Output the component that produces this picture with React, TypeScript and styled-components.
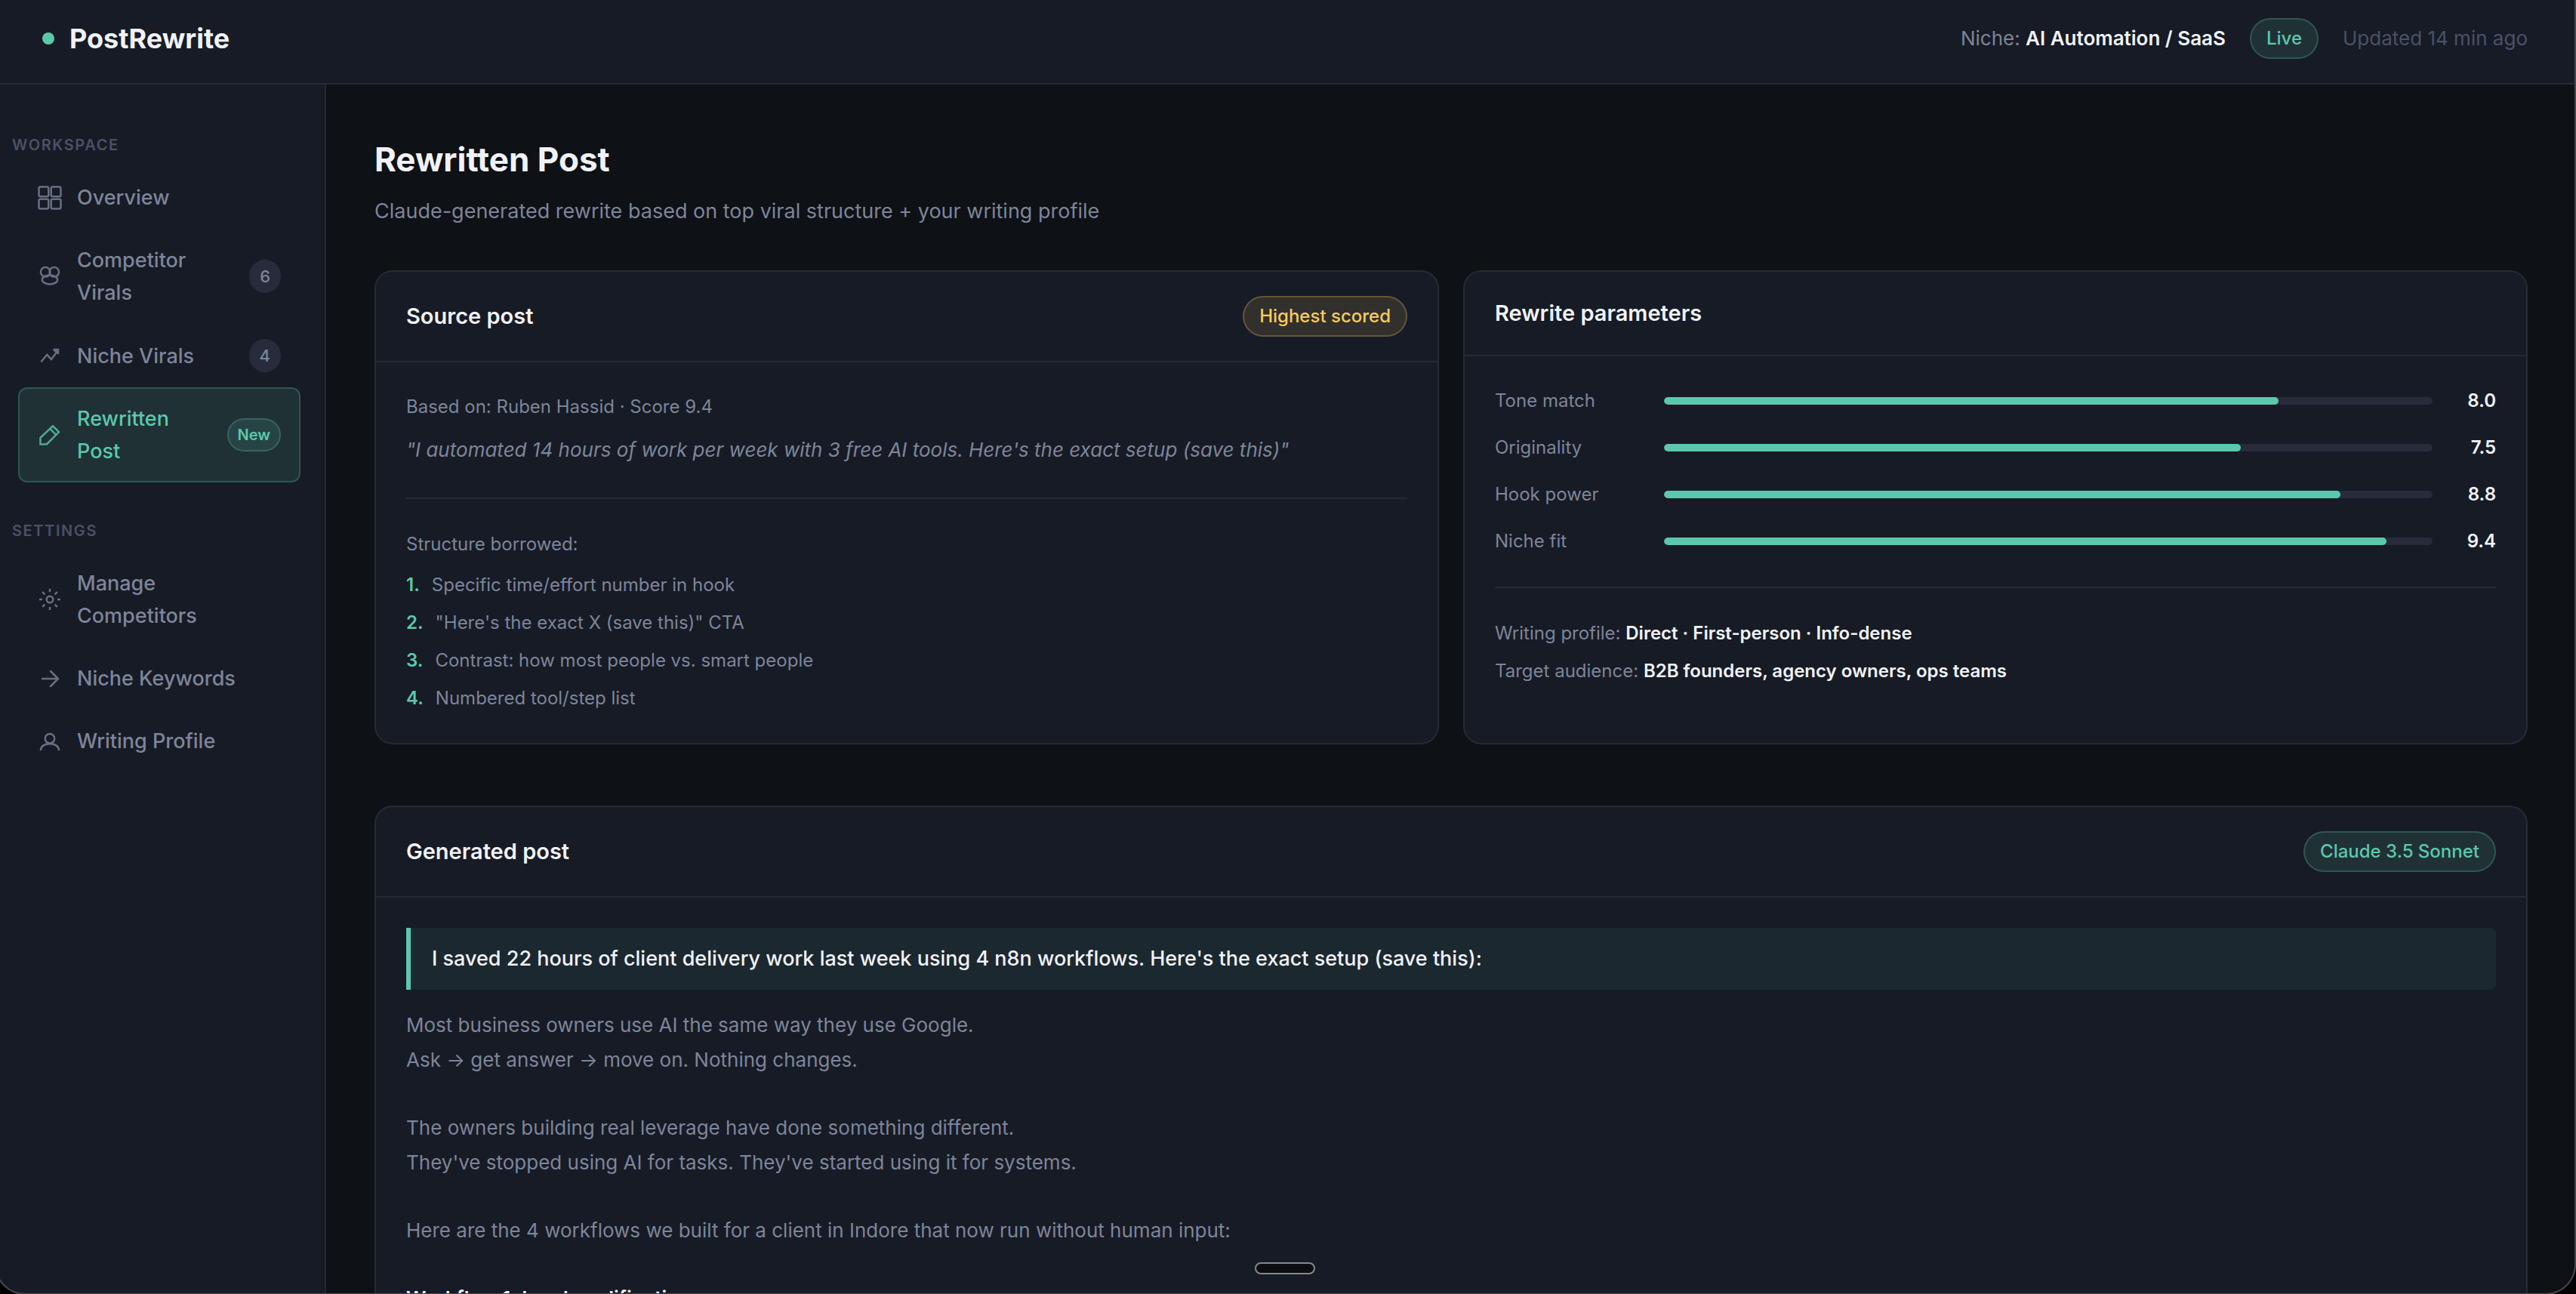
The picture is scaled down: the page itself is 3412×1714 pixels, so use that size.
import React from "react";
import styled, { createGlobalStyle, css } from "styled-components";

const c = {
  bg: "#0e1115",
  surface: "#171b25",
  raised: "#272b3b",
  line: "#262a34",
  text: "#f0f2f8",
  muted: "#7d859a",
  dim: "#4a5168",
  accent: "#5bc8ac",
  accentSoft: "rgba(91, 200, 172, 0.13)",
  accentLine: "rgba(91, 200, 172, 0.25)",
  gold: "#f5cc60",
};

const Global = createGlobalStyle`
  *, *::before, *::after { box-sizing: border-box; }
  html, body { margin: 0; height: 100%; background: ${c.bg}; }
  #root { height: 100%; }
  h1, h2, p, ol, ul, dl, dd, blockquote { margin: 0; padding: 0; }
  ol, ul { list-style: none; }
`;

const Window = styled.div`
  height: 100vh;
  display: flex;
  flex-direction: column;
  overflow: hidden;
  background: ${c.bg};
  color: ${c.text};
  font-family: Inter, "Liberation Sans", sans-serif;
  font-size: 26px;
  line-height: 46px;
`;

const WindowEdge = styled.div`
  position: fixed;
  inset: -40px 0 -1px -7px;
  border: 2px solid #45474c;
  border-radius: 40px;
  box-shadow: 0 0 0 40px #000;
  pointer-events: none;
`;

const Header = styled.header`
  flex: none;
  display: flex;
  align-items: center;
  justify-content: space-between;
  height: 112px;
  padding: 0 64px 8px 56px;
  background: ${c.surface};
  border-bottom: 2px solid ${c.line};
`;

const Logo = styled.a`
  display: flex;
  align-items: center;
  gap: 20px;
  color: ${c.text};
  font-size: 36px;
  font-weight: 700;
  text-decoration: none;
`;

const Dot = styled.span`
  width: 16px;
  height: 16px;
  border-radius: 50%;
  background: ${c.accent};
`;

const HeaderMeta = styled.div`
  display: flex;
  align-items: center;
  gap: 32px;
  color: ${c.muted};
`;

const Strong = styled.strong`
  color: ${c.text};
  font-weight: 600;
`;

const Updated = styled.span`
  color: ${c.dim};
`;

const Badge = styled.span<{ $tone?: "green" | "gold" }>`
  flex: none;
  padding: 6px 20px;
  border: 2px solid;
  border-radius: 40px;
  font-size: 24px;
  line-height: 38px;
  font-weight: 500;
  ${({ $tone }) =>
    $tone === "gold"
      ? css`
          color: ${c.gold};
          background: rgba(245, 204, 96, 0.12);
          border-color: rgba(245, 204, 96, 0.25);
        `
      : css`
          color: ${c.accent};
          background: ${c.accentSoft};
          border-color: ${c.accentLine};
        `}
`;

const Shell = styled.div`
  flex: 1;
  min-height: 0;
  display: flex;
`;

const Sidebar = styled.nav`
  flex: none;
  width: 432px;
  padding: 63px 32px 0 24px;
  background: ${c.surface};
  border-right: 2px solid ${c.line};
`;

const NavGroup = styled.section`
  margin-bottom: 47px;
`;

const NavLabel = styled.h2`
  margin-left: -8px;
  padding-bottom: 11px;
  color: ${c.dim};
  font-size: 20px;
  line-height: 34px;
  font-weight: 600;
  letter-spacing: 0.08em;
  text-transform: uppercase;
`;

const NavItem = styled.a<{ $active?: boolean }>`
  display: flex;
  align-items: center;
  gap: 20px;
  padding: 18px 24px;
  border: 2px solid ${({ $active }) => ($active ? c.accentLine : "transparent")};
  border-radius: 12px;
  background: ${({ $active }) => ($active ? c.accentSoft : "transparent")};
  color: ${({ $active }) => ($active ? c.accent : c.muted)};
  font-size: 27px;
  line-height: 43px;
  font-weight: 500;
  text-decoration: none;
`;

const NavText = styled.span`
  flex: 1;
`;

const NavIcon = styled.svg`
  flex: none;
  width: 32px;
  height: 32px;
  fill: none;
  stroke: currentColor;
  stroke-width: 2.5;
  opacity: 0.8;
`;

const Count = styled.span`
  padding: 4px 14px;
  border-radius: 22px;
  background: ${c.raised};
  font-size: 22px;
  line-height: 36px;
`;

const NewTag = styled.span`
  padding: 4px 12px;
  border: 2px solid ${c.accentLine};
  border-radius: 22px;
  background: ${c.accentSoft};
  font-size: 20px;
  line-height: 32px;
  font-weight: 600;
`;

const Main = styled.main`
  flex: 1;
  min-width: 0;
  padding: 64px 64px 0;
  overflow: hidden;
`;

const PageTitle = styled.h1`
  font-size: 44px;
  line-height: 70px;
  font-weight: 700;
`;

const PageSub = styled.p`
  margin-top: 12px;
  color: ${c.muted};
  font-size: 27px;
  line-height: 43px;
`;

const CardRow = styled.div`
  display: grid;
  grid-template-columns: 1fr 1fr;
  gap: 32px;
  margin: 57px 0 81px;
`;

const Card = styled.section`
  border: 2px solid ${c.line};
  border-radius: 24px;
  background: ${c.surface};
`;

const CardHead = styled.header`
  display: flex;
  align-items: center;
  justify-content: space-between;
  padding: 32px 40px;
  border-bottom: 2px solid ${c.line};
`;

const CardTitle = styled.h2`
  font-size: 29px;
  line-height: 46px;
  font-weight: 600;
`;

const CardBody = styled.div`
  padding: 40px;
`;

const Note = styled.p`
  color: ${c.muted};
  font-size: 24px;
  line-height: 38px;
`;

const Quote = styled.blockquote`
  margin-top: 16px;
  color: ${c.muted};
  font-style: italic;
  line-height: 44px;
`;

const Divider = styled.hr`
  height: 2px;
  margin: 41px 0;
  border: 0;
  background: ${c.line};
`;

const Steps = styled.ol`
  display: grid;
  gap: 12px;
  margin-top: 16px;
`;

const Step = styled.li`
  display: flex;
  gap: 16px;
  color: ${c.muted};
  font-size: 24px;
  line-height: 38px;
`;

const StepNo = styled.span`
  color: ${c.accent};
  font-weight: 600;
`;

const Scores = styled.dl`
  display: grid;
  gap: 24px;
  margin: 0;
  font-size: 24px;
  line-height: 38px;
`;

const ScoreRow = styled.div`
  display: grid;
  grid-template-columns: 200px 1fr 60px;
  align-items: center;
  gap: 24px;
`;

const ScoreName = styled.dt`
  color: ${c.muted};
`;

const Track = styled.dd`
  height: 10px;
  border-radius: 5px;
  background: ${c.raised};
  overflow: hidden;
`;

const Fill = styled.div`
  height: 100%;
  border-radius: 5px;
  background: ${c.accent};
`;

const ScoreValue = styled.dd`
  font-weight: 600;
  text-align: right;
`;

const Facts = styled.div`
  display: grid;
  gap: 12px;
`;

const Hook = styled.p`
  margin-bottom: 24px;
  padding: 18px 28px;
  border-left: 6px solid ${c.accent};
  border-radius: 0 8px 8px 0;
  background: rgba(91, 200, 172, 0.08);
  font-size: 27px;
  font-weight: 500;
`;

const PostText = styled.div`
  display: grid;
  gap: 44px;
  color: ${c.muted};
`;

const Paragraph = styled.p`
  white-space: pre-line;
`;

const HomePill = styled.div`
  position: fixed;
  bottom: 26px;
  left: calc(50% - 44px);
  width: 80px;
  height: 16px;
  border: 2px solid #86888c;
  border-radius: 8px;
  background: #0b0d12;
`;

const icons = {
  grid: (
    <>
      <rect x="1.5" y="1.5" width="12.8" height="12.8" rx="2" />
      <rect x="17.7" y="1.5" width="12.8" height="12.8" rx="2" />
      <rect x="1.5" y="17.7" width="12.8" height="12.8" rx="2" />
      <rect x="17.7" y="17.7" width="12.8" height="12.8" rx="2" />
    </>
  ),
  people: (
    <>
      <circle cx="10.2" cy="10.3" r="6.3" />
      <circle cx="21.8" cy="10.3" r="6.3" />
      <ellipse cx="16" cy="20.4" rx="10.2" ry="6" />
    </>
  ),
  trend: (
    <g strokeLinecap="round">
      <path d="M5 23.5L12.3 14.8L18 21L26.5 9.5" />
      <path d="M21.5 8H27V13" />
      <path d="M22 9L26.5 12.5" />
    </g>
  ),
  pencil: <path d="M3.5 28.5V19.8L20 4.3L28 12.3L11.8 28.5ZM16.2 7.9L24.2 15.9" />,
  gear: (
    <>
      <circle cx="16" cy="16" r="4.3" />
      <path d="M16 2V6M16 26V30M2 16H6M26 16H30M6.2 6.2L9.4 9.4M22.6 22.6L25.8 25.8M6.2 25.8L9.4 22.6M22.6 9.4L25.8 6.2" />
    </>
  ),
  arrow: <path d="M6 16H27M17 6L27 16L17 26" strokeLinecap="round" />,
  person: (
    <>
      <circle cx="16" cy="12.3" r="6.3" />
      <path d="M3.8 28C4.5 22.5 9 19.2 16 19.2S27.5 22.5 28.2 28" />
    </>
  ),
};

type NavEntry = {
  label: string;
  icon: keyof typeof icons;
  count?: number;
  isNew?: boolean;
  active?: boolean;
};

const workspace: NavEntry[] = [
  { label: "Overview", icon: "grid" },
  { label: "Competitor Virals", icon: "people", count: 6 },
  { label: "Niche Virals", icon: "trend", count: 4 },
  { label: "Rewritten Post", icon: "pencil", isNew: true, active: true },
];

const settings: NavEntry[] = [
  { label: "Manage Competitors", icon: "gear" },
  { label: "Niche Keywords", icon: "arrow" },
  { label: "Writing Profile", icon: "person" },
];

const steps = [
  "Specific time/effort number in hook",
  "\"Here's the exact X (save this)\" CTA",
  "Contrast: how most people vs. smart people",
  "Numbered tool/step list",
];

const scores = [
  { name: "Tone match", value: 8.0 },
  { name: "Originality", value: 7.5 },
  { name: "Hook power", value: 8.8 },
  { name: "Niche fit", value: 9.4 },
];

const paragraphs = [
  "Most business owners use AI the same way they use Google.\nAsk → get answer → move on. Nothing changes.",
  "The owners building real leverage have done something different.\nThey've stopped using AI for tasks. They've started using it for systems.",
  "Here are the 4 workflows we built for a client in Indore that now run without human input:",
];

function NavSection({ title, items }: { title: string; items: NavEntry[] }) {
  return (
    <NavGroup>
      <NavLabel>{title}</NavLabel>
      {items.map((item) => (
        <NavItem
          key={item.label}
          href="#"
          $active={item.active}
          aria-current={item.active ? "page" : undefined}
        >
          <NavIcon viewBox="0 0 32 32" aria-hidden="true">
            {icons[item.icon]}
          </NavIcon>
          <NavText>{item.label}</NavText>
          {item.count !== undefined && <Count>{item.count}</Count>}
          {item.isNew && <NewTag>New</NewTag>}
        </NavItem>
      ))}
    </NavGroup>
  );
}

export default function App() {
  return (
    <>
      <Global />
      <Window>
        <Header>
          <Logo href="#">
            <Dot />
            PostRewrite
          </Logo>
          <HeaderMeta>
            <span>
              Niche: <Strong>AI Automation / SaaS</Strong>
            </span>
            <Badge>Live</Badge>
            <Updated>Updated 14 min ago</Updated>
          </HeaderMeta>
        </Header>
        <Shell>
          <Sidebar>
            <NavSection title="Workspace" items={workspace} />
            <NavSection title="Settings" items={settings} />
          </Sidebar>
          <Main>
            <PageTitle>Rewritten Post</PageTitle>
            <PageSub>
              Claude-generated rewrite based on top viral structure + your writing profile
            </PageSub>
            <CardRow>
              <Card>
                <CardHead>
                  <CardTitle>Source post</CardTitle>
                  <Badge $tone="gold">Highest scored</Badge>
                </CardHead>
                <CardBody>
                  <Note>Based on: Ruben Hassid · Score 9.4</Note>
                  <Quote>
                    "I automated 14 hours of work per week with 3 free AI tools. Here's the exact
                    setup (save this)"
                  </Quote>
                  <Divider />
                  <Note>Structure borrowed:</Note>
                  <Steps>
                    {steps.map((step, i) => (
                      <Step key={step}>
                        <StepNo>{i + 1}.</StepNo>
                        <span>{step}</span>
                      </Step>
                    ))}
                  </Steps>
                </CardBody>
              </Card>
              <Card>
                <CardHead>
                  <CardTitle>Rewrite parameters</CardTitle>
                </CardHead>
                <CardBody>
                  <Scores>
                    {scores.map(({ name, value }) => (
                      <ScoreRow key={name}>
                        <ScoreName>{name}</ScoreName>
                        <Track>
                          <Fill style={{ width: `${value * 10}%` }} />
                        </Track>
                        <ScoreValue>{value.toFixed(1)}</ScoreValue>
                      </ScoreRow>
                    ))}
                  </Scores>
                  <Divider />
                  <Facts>
                    <Note>
                      Writing profile: <Strong>Direct · First-person · Info-dense</Strong>
                    </Note>
                    <Note>
                      Target audience: <Strong>B2B founders, agency owners, ops teams</Strong>
                    </Note>
                  </Facts>
                </CardBody>
              </Card>
            </CardRow>
            <Card>
              <CardHead>
                <CardTitle>Generated post</CardTitle>
                <Badge>Claude 3.5 Sonnet</Badge>
              </CardHead>
              <CardBody>
                <Hook>
                  I saved 22 hours of client delivery work last week using 4 n8n workflows. Here's
                  the exact setup (save this):
                </Hook>
                <PostText>
                  {paragraphs.map((text) => (
                    <Paragraph key={text}>{text}</Paragraph>
                  ))}
                  <Paragraph>
                    <Strong>Workflow 1: Lead qualification</Strong>
                  </Paragraph>
                </PostText>
              </CardBody>
            </Card>
          </Main>
        </Shell>
      </Window>
      <HomePill />
      <WindowEdge />
    </>
  );
}
